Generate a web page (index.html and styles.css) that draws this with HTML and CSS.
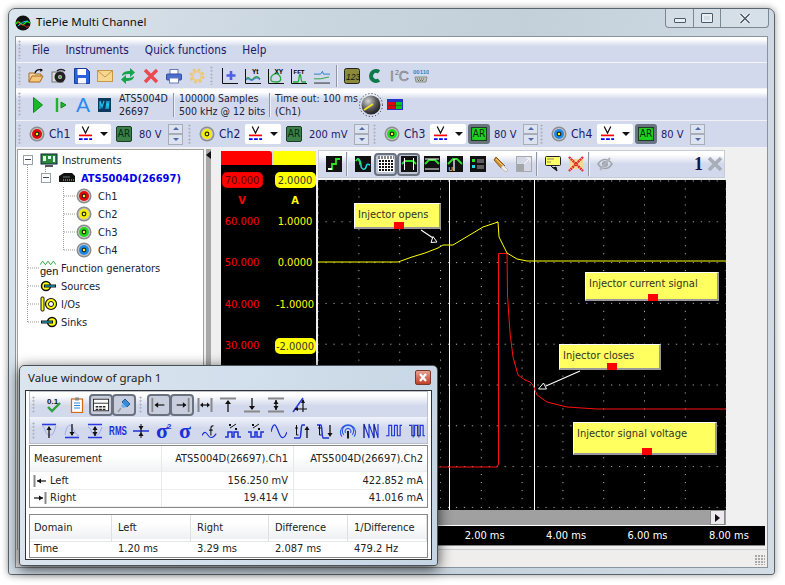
FILE: index.html
```html
<!DOCTYPE html>
<html lang="en">
<head>
<meta charset="utf-8">
<title>TiePie Multi Channel</title>
<link rel="stylesheet" href="styles.css">
</head>
<body>
<svg class="defs" width="0" height="0" aria-hidden="true">
  <defs>
    <symbol id="ring" viewBox="0 0 16 16"><circle cx="8" cy="8" r="7.5" fill="#8d8d8d"/><circle cx="8" cy="8" r="6" fill="#c8c8c8"/><circle cx="8" cy="8" r="5" fill="var(--c)"/><circle cx="8" cy="8" r="2.4" fill="#222"/><circle cx="8" cy="8" r="1.2" fill="#ff0"/></symbol>
    <symbol id="volt" viewBox="0 0 16 16"><path d="M4.500 0l3.500 7 3.500-7" fill="none" stroke="#111" stroke-width="1.300"/><path d="M1 9.500h14" stroke="#f00" stroke-width="1.800"/><path d="M1 13.500h14" stroke="#00f" stroke-width="1.800" stroke-dasharray="4 1.500"/></symbol>
    <radialGradient id="knobG" cx=".35" cy=".3" r=".8"><stop offset="0" stop-color="#d5d5d5"/><stop offset=".55" stop-color="#555"/><stop offset="1" stop-color="#111"/></radialGradient>
    <pattern id="grid" x="317.6" y="180.5" width="40.8" height="40.8" patternUnits="userSpaceOnUse">
      <rect x="0" y="0" width="1" height="1" fill="#ccc"/><rect x="8" y="0" width="1" height="1" fill="#ccc"/><rect x="16" y="0" width="1" height="1" fill="#ccc"/><rect x="24" y="0" width="1" height="1" fill="#ccc"/><rect x="32" y="0" width="1" height="1" fill="#ccc"/>
      <rect x="0" y="8" width="1" height="1" fill="#ccc"/><rect x="0" y="16" width="1" height="1" fill="#ccc"/><rect x="0" y="24" width="1" height="1" fill="#ccc"/><rect x="0" y="32" width="1" height="1" fill="#ccc"/>
    </pattern>
  </defs>
</svg>

<div class="window">
  <header class="titlebar">
    <svg class="app-icon" viewBox="0 0 16 16"><circle cx="8" cy="8" r="7.5" fill="#111"/><path d="M1 9c3-6 5 3 8 0s3-3 6-1" fill="none" stroke="#0f0" stroke-width="1.2"/><path d="M2 6c3 5 6 3 8 5s2 1 4 0" fill="none" stroke="#f22" stroke-width="1"/><path d="M3 11c3-3 6-5 10-5" fill="none" stroke="#2cf" stroke-width="1"/></svg>
    <span class="title-text">TiePie Multi Channel</span>
    <div class="caption">
      <span class="cap-btn cap-min"><i class="glyph-min"></i></span>
      <span class="cap-btn cap-max"><i class="glyph-max"></i></span>
      <span class="cap-btn cap-close"><svg width="12" height="11" viewBox="0 0 12 11"><path d="M1.5 1l9 9M10.5 1l-9 9" stroke="#fff" stroke-width="3.2"/><path d="M1.5 1l9 9M10.5 1l-9 9" stroke="#4a5a68" stroke-width="1.6"/></svg></span>
    </div>
  </header>

  <div class="client">
    <nav class="menubar">
      <span class="gripper"></span>
      <span class="menu-item">File</span><span class="menu-item">Instruments</span><span class="menu-item">Quick functions</span><span class="menu-item">Help</span>
    </nav>

    <div class="tb tb-main">
      <span class="gripper"></span>
      <div class="icons">
        <svg class="i" viewBox="0 0 16 16"><path d="M1 14V5h5l1 1h6v2" fill="#f2d8a0" stroke="#a86a20"/><path d="M1 14l3-6h11l-3 6z" fill="#f4c878" stroke="#a86a20"/><path d="M7 5c1-3 4-4 7-3" fill="none" stroke="#111" stroke-width="1.4"/><path d="M12 .5l3 1.5-2.500 2z" fill="#111"/></svg>
        <svg class="i" viewBox="0 0 16 16"><rect x="1" y="4" width="11" height="10" fill="#ddd" stroke="#777"/><circle cx="9" cy="9" r="5.500" fill="#222"/><circle cx="9" cy="9" r="2" fill="#c8c8c8"/><path d="M6 3c2-2 6-2 8 0" fill="none" stroke="#222" stroke-width="1.500"/><circle cx="9" cy="9" r="1" fill="#2a2"/></svg>
        <svg class="i" viewBox="0 0 16 16"><path d="M.5.5h12l3 3v12H.5z" fill="#2a62d8" stroke="#173f96"/><rect x="3.500" y="1" width="8.500" height="6" fill="#fff"/><rect x="4" y="10" width="8" height="5.500" fill="#f4f6ff"/></svg>
        <svg class="i" viewBox="0 0 16 16"><rect x=".5" y="2.500" width="15" height="11" fill="#f6d790" stroke="#c59848"/><path d="M1 3l7 6 7-6" fill="none" stroke="#c59848"/></svg>
        <svg class="i" viewBox="0 0 16 16"><path d="M2 8c0-4 4-5 8-5V0l5 4.500L10 9V6c-3 0-5 0-8 2z" fill="#16a34a"/><path d="M14 8c0 4-4 5-8 5v3l-5-4.500L6 7v3c3 0 5 0 8-2z" fill="#16a34a"/></svg>
        <svg class="i" viewBox="0 0 16 16"><path d="M2 2l12 12M14 2L2 14" stroke="#e84a50" stroke-width="3.400"/></svg>
        <svg class="i" viewBox="0 0 16 16"><rect x="4" y="1.500" width="8" height="5" fill="#fff" stroke="#6a7ab8"/><rect x=".5" y="6" width="15" height="6" rx="1" fill="#4a6fd0" stroke="#32509c"/><rect x="3.500" y="10" width="9" height="5" fill="#fff" stroke="#6a7ab8"/></svg>
        <svg class="i" viewBox="0 0 16 16"><circle cx="8" cy="8" r="6" fill="none" stroke="#e9c778" stroke-width="3.200" stroke-dasharray="2.600 2.100"/><circle cx="8" cy="8" r="4.500" fill="none" stroke="#eecb84" stroke-width="2"/></svg>
      </div>
      <span class="gripper gripper-mid"></span>
      <div class="icons">
        <svg class="i" viewBox="0 0 16 16"><path d="M.5 0v15.500H16" fill="none" stroke="#111"/><path d="M9 3v9M4.500 7.500h9" stroke="#4e5ee8" stroke-width="2.600"/></svg>
        <svg class="i" viewBox="0 0 16 16"><path d="M.5 1v14.500H16" fill="none" stroke="#111"/><path d="M1 11c3-4 4 3 7 0s4-3 7 0" fill="none" stroke="#2a9a58" stroke-width="1.500"/><path d="M1 12c3-3 4 2 7 0s4-3 7 0" fill="none" stroke="#3a7ae0"/><text class="svt" x="7" y="6" font-size="6.500" font-weight="700">Yt</text></svg>
        <svg class="i" viewBox="0 0 16 16"><path d="M.5 1v14.500H16" fill="none" stroke="#111"/><path d="M3 12c-1-5 5-8 8-5s2 7-2 7-6-1-6-2z" fill="none" stroke="#22a83a" stroke-width="1.300"/><text class="svt" x="6.500" y="5.500" font-size="6.500" font-weight="700">XY</text></svg>
        <svg class="i" viewBox="0 0 16 16"><path d="M.5 1v14.500H16" fill="none" stroke="#111"/><path d="M2 14h5c1 0 1-8 2-8s1 8 2 8h4" fill="none" stroke="#22a83a" stroke-width="1.300"/><text class="svt" x="2.500" y="5.500" font-size="6" font-weight="700">FFT</text></svg>
        <svg class="i" viewBox="0 0 17 16"><path d="M0 6h7l2-3 1 3h7" fill="none" stroke="#2a7ac8"/><path d="M0 11h7l9-2" fill="none" stroke="#22a83a"/><path d="M0 15.500h17" stroke="#222"/></svg>
      </div>
      <span class="vsep"></span>
      <div class="icons icons-end">
        <svg class="i" viewBox="0 0 16 16"><rect x=".5" y=".5" width="15" height="15" rx="2" fill="#8a8a3a" stroke="#222"/><text class="svt" x="2" y="11.500" font-size="8.500" font-style="italic" fill="#111">123</text></svg>
        <svg class="i" viewBox="0 0 16 16"><path d="M12 4a5 5 0 1 0 0 8" fill="none" stroke="#0d7a4c" stroke-width="4"/></svg>
        <span class="i2c"><b>I</b><sup>2</sup><b>C</b></span>
        <svg class="i" viewBox="0 0 16 16"><text class="svt" x="0" y="6" font-size="6" font-weight="700" fill="#2a8ac0">00110</text><path d="M2 9h12l-1 5H3z" fill="#b8c2b8" stroke="#8a8f8a"/><path d="M4 11h8M5 12.500h6" stroke="#5a6a5a" stroke-dasharray="1 1"/></svg>
      </div>
    </div>

    <div class="tb tb-inst">
      <span class="gripper"></span>
      <div class="icons">
        <svg class="i" viewBox="0 0 16 16"><path d="M1.500 .5l9 7.500-9 7.500z" fill="#1db52c" stroke="#0d8a1c"/></svg>
        <svg class="i" viewBox="0 0 16 16"><path d="M2 1v14" stroke="#1db52c" stroke-width="2.400"/><path d="M6 5l5 3-5 3z" fill="#1db52c" stroke="#0d8a1c"/></svg>
        <span class="a-glyph">A</span>
        <svg class="i i-m" viewBox="0 0 13 16"><rect width="13" height="14" y="1" fill="#0a3a60"/><path d="M2 12V4l2 6 2-6M8 12l1-8 1 8 1-8" fill="none" stroke="#20c0f0" stroke-width="1.200"/></svg>
      </div>
      <div class="info info-a"><span>ATS5004D</span><span>26697</span></div>
      <span class="vsep vsep-tall"></span>
      <div class="info info-s"><span>100000 Samples</span><span>500 kHz @ 12 bits</span></div>
      <span class="vsep vsep-tall"></span>
      <div class="info info-t"><span>Time out: 100 ms</span><span>(Ch1)</span></div>
      <svg class="knob" viewBox="0 0 24 24"><circle cx="12" cy="12" r="11.500" fill="none" stroke="#222" stroke-dasharray="1 2.200"/><circle cx="12" cy="12" r="9.500" fill="url(#knobG)"/><path d="M5 17l9-6" stroke="#f2e21c" stroke-width="1.800"/></svg>
      <svg class="colorbox" viewBox="0 0 16 11"><rect width="16" height="11" fill="#2233cc"/><rect x="1" y="3" width="7" height="7" fill="#e00010"/><rect x="9" y="3" width="6" height="7" fill="#10c020"/><path d="M1 6.500h14" stroke="#0a5a10" stroke-width=".6"/></svg>
    </div>

    <div class="tb tb-chan">
      <div class="chan chan-1">
        <span class="gripper"></span>
        <svg class="ring c1"><use href="#ring"/></svg>
        <span class="chan-name">Ch1</span>
        <span class="combo"><svg class="v"><use href="#volt"/></svg><i class="caret"></i></span>
        <span class="ar">AR</span>
        <span class="range r1">80 V</span>
        <span class="spin"><i class="up"></i><i class="down"></i></span>
      </div>
      <div class="chan chan-2">
        <span class="gripper"></span>
        <svg class="ring c2"><use href="#ring"/></svg>
        <span class="chan-name">Ch2</span>
        <span class="combo"><svg class="v"><use href="#volt"/></svg><i class="caret"></i></span>
        <span class="ar">AR</span>
        <span class="range r2">200 mV</span>
        <span class="spin"><i class="up"></i><i class="down"></i></span>
      </div>
      <div class="chan chan-3">
        <span class="gripper"></span>
        <svg class="ring c3"><use href="#ring"/></svg>
        <span class="chan-name">Ch3</span>
        <span class="combo"><svg class="v"><use href="#volt"/></svg><i class="caret"></i></span>
        <span class="ar on">AR</span>
        <span class="range r1">80 V</span>
        <span class="spin"><i class="up"></i><i class="down"></i></span>
      </div>
      <div class="chan chan-4">
        <span class="gripper"></span>
        <svg class="ring c4"><use href="#ring"/></svg>
        <span class="chan-name">Ch4</span>
        <span class="combo"><svg class="v"><use href="#volt"/></svg><i class="caret"></i></span>
        <span class="ar on">AR</span>
        <span class="range r1">80 V</span>
        <span class="spin"><i class="up"></i><i class="down"></i></span>
      </div>
    </div>

    <div class="workspace">
      <aside class="tree">
        <svg class="tree-lines" width="186" height="180"><path d="M9.500 15v157M10 118h12M10 136h12M10 154h12M10 172h12M27.500 15v8M45.500 37v63M46 46h12M46 64h12M46 82h12M46 100h12" fill="none" stroke="#999" stroke-dasharray="1 1"/></svg>
        <div class="node"><span class="exp"></span>
          <svg class="ti" viewBox="0 0 18 16"><rect x="1" y="2" width="16" height="10" fill="#2a8a3a" stroke="#124"/><path d="M3 4h3v5H3zM8 4h3v3H8zM13 4h2v6h-2z" fill="#dfe"/><path d="M5 13h8v2H5z" fill="#555"/></svg>
          <span class="label">Instruments</span></div>
        <div class="node lv1"><span class="exp"></span>
          <svg class="ti" viewBox="0 0 18 16"><path d="M1 12V6l5-3h8l3 3v6z" fill="#111"/><path d="M5 10h11" stroke="#e33" stroke-dasharray="1 1" stroke-width="2"/><path d="M5 7h7" stroke="#777"/></svg>
          <span class="label dev">ATS5004D(26697)</span></div>
        <div class="node lv2"><svg class="ring c1"><use href="#ring"/></svg><span class="label">Ch1</span></div>
        <div class="node lv2"><svg class="ring c2"><use href="#ring"/></svg><span class="label">Ch2</span></div>
        <div class="node lv2"><svg class="ring c3"><use href="#ring"/></svg><span class="label">Ch3</span></div>
        <div class="node lv2"><svg class="ring c4"><use href="#ring"/></svg><span class="label">Ch4</span></div>
        <div class="node lv0"><span class="gen"><span class="gen-text">gen</span><svg class="gen-wave" viewBox="0 0 18 5"><path d="M0 5l3-4 3 4 3-4 3 4 3-4 3 4" fill="none" stroke="#1a9a2a"/></svg></span><span class="label">Function generators</span></div>
        <div class="node lv0"><svg class="ti" viewBox="0 0 18 16"><circle cx="6" cy="8" r="4.500" fill="#ff0" stroke="#111" stroke-width="1.500"/><path d="M4 8h12" stroke="#111" stroke-width="3"/><path d="M5 8h10" stroke="#2cf"/></svg><span class="label">Sources</span></div>
        <div class="node lv0"><svg class="ti" viewBox="0 0 18 16"><rect x="1" y="1" width="3" height="14" rx="1" fill="#ff0" stroke="#111"/><circle cx="11" cy="8" r="5.500" fill="#ff0" stroke="#111" stroke-width="1.200"/><circle cx="11" cy="8" r="2.500" fill="#fff" stroke="#111"/></svg><span class="label">I/Os</span></div>
        <div class="node lv0"><svg class="ti" viewBox="0 0 18 16"><circle cx="12" cy="8" r="4.500" fill="#ff0" stroke="#111" stroke-width="1.500"/><path d="M1 8h12" stroke="#111" stroke-width="3"/><path d="M2 8h10" stroke="#2cf"/></svg><span class="label">Sinks</span></div>
      </aside>
      <div class="splitter"><i class="split-arrow"></i></div>

      <div class="right">
        <div class="scope">
          <div class="axes">
            <div class="axis-tabs"><span class="tab red"></span><span class="tab yellow"></span></div>
            <div class="axis-grid">
              <span class="badge red">70.000</span><span class="badge yellow">2.0000</span>
              <span class="unit red-t">V</span><span class="unit yel-t">A</span>
              <span class="tick red-t">60.000</span><span class="tick yel-t">1.0000</span>
              <span class="tick red-t">50.000</span><span class="tick yel-t">0.0000</span>
              <span class="tick red-t">40.000</span><span class="tick yel-t">-1.0000</span>
              <span class="tick red-t">30.000</span><span class="badge yellow">-2.0000</span>
            </div>
          </div>
          <div class="plot-col">
            <div class="plot-tb">
              <svg class="i" viewBox="0 0 16 16"><rect width="16" height="16" fill="#111"/><path d="M2 13h4V8h4V3h4" fill="none" stroke="#2de02d" stroke-width="1.800"/><path d="M2 13h4" stroke="#fff" stroke-width="1.800"/></svg>
              <span class="vsep vs-plot"></span>
              <svg class="i" viewBox="0 0 16 16"><rect width="16" height="16" fill="#111"/><path d="M1 5c3-6 5 2 5 5s4 5 5 1 2-3 4-2" fill="none" stroke="#2dd" stroke-width="1.500"/><path d="M1 5c2-4 4 0 4 4" fill="none" stroke="#2de02d" stroke-width="1.500"/></svg>
              <span class="pbtn"><svg class="i" viewBox="0 0 16 16"><rect width="16" height="16" fill="#fff"/><path d="M0 1.500h16" stroke="#888" stroke-width="3" stroke-dasharray="2 1"/><path d="M1 5h14M1 8h14M1 11h14M1 14h14" stroke="#111" stroke-width="2" stroke-dasharray="2 1"/></svg></span>
              <span class="pbtn"><svg class="i" viewBox="0 0 16 16"><rect width="16" height="16" fill="#111"/><path d="M1 8l3-3h8l3 3" fill="none" stroke="#2de02d" stroke-width="1.800"/><path d="M3.500 2v12M12.500 2v12" stroke="#fff"/></svg></span>
              <svg class="i" viewBox="0 0 16 16"><rect width="16" height="16" fill="#111"/><path d="M1 8l4-4h6l4 4" fill="none" stroke="#2de02d" stroke-width="1.800"/><path d="M1 3h14M1 13h14" stroke="#fff"/></svg>
              <svg class="i" viewBox="0 0 16 16"><rect width="16" height="16" fill="#111"/><path d="M1 8l5-5h4l5 5" fill="none" stroke="#2de02d" stroke-width="1.800"/><path d="M7 3v12" stroke="#fff" stroke-width="1.300"/><text class="svt" x="1.500" y="15" font-size="6" fill="#fff">U</text></svg>
              <svg class="i" viewBox="0 0 16 16"><rect width="16" height="16" fill="#111"/><path d="M2 3h3v3H2z" fill="#2de02d"/><path d="M2 9h3v3H2z" fill="#2dd"/><path d="M7 4h7M7 6h7M7 10h7M7 12h7" stroke="#aaa"/></svg>
              <svg class="i" viewBox="0 0 16 16"><path d="M3 1l9 9-3 3-8-9z" fill="#d89030" stroke="#8a5a18"/><path d="M3 3l8 8" stroke="#f0d080"/><path d="M10 9l5 5-2 2-5-4z" fill="#eee" stroke="#bbb"/></svg>
              <svg class="i" viewBox="0 0 16 16"><rect x=".5" y=".5" width="15" height="15" fill="#d4d8e4" stroke="#a8aab0"/><rect x="1" y="8" width="7" height="7" fill="#a4a6aa"/><path d="M8 8l6-6M10 2h4v4" fill="none" stroke="#fafafa"/></svg>
              <span class="vsep vs-plot"></span>
              <svg class="i" viewBox="0 0 16 16"><rect x=".5" y=".5" width="15" height="9" rx="1" fill="#ff6" stroke="#222"/><path d="M2 3h7M2 6h4" stroke="#886"/><path d="M6 10l6 5-1-4-3 1z" fill="#111" stroke="#111"/></svg>
              <svg class="i" viewBox="0 0 16 16"><rect x="1" y="3" width="14" height="10" fill="#f0da90"/><path d="M1 1l14 14M15 1L1 15" stroke="#e02a30" stroke-width="2.400" stroke-dasharray="2 .6"/></svg>
              <span class="vsep vs-plot"></span>
              <svg class="i" viewBox="0 0 16 16"><path d="M1 8c4-6 10-6 14 0-4 6-10 6-14 0z" fill="none" stroke="#a0a4ac" stroke-width="1.500"/><circle cx="8" cy="8" r="3" fill="#a0a4ac"/><path d="M3 14L13 2" stroke="#b0b4bc" stroke-width="2"/></svg>
              <span class="graph-num">1</span>
              <svg class="i" viewBox="0 0 16 16"><path d="M2 2l12 12M14 2L2 14" stroke="#a8aeb8" stroke-width="3.600"/></svg>
            </div>
            <div class="plot">
              <svg class="plot-svg" viewBox="318 180 408 330" width="408" height="330">
                <rect x="318" y="180" width="408" height="330" fill="#000"/>
                <rect x="318" y="180" width="408" height="330" fill="url(#grid)"/>
                <path d="M449.500 180v330M534.500 180v330" stroke="#fff" stroke-width="1"/>
                <path d="M318 467H497L498.500 464V253.500H507L507.500 295L510 333L513 357L518 375L525 380L530 382L533 385L537 395L547 402L567 407L597 409H726" fill="none" stroke="#ff1010" stroke-width="1"/>
                <path d="M318 262H398L412 257L425 253L438 248L443 245L453 245L468 236L483 227L498 222L499 237L507 253L517 259L527 261H726" fill="none" stroke="#ff0" stroke-width="1"/>
                <path d="M421 230l12 8M580 371l-34 15" stroke="#fff" stroke-width="1.100"/>
                <path d="M437 242l-6 .5 2-6z" fill="#000" stroke="#fff"/>
                <path d="M538.500 389l5-6 3 6z" fill="#000" stroke="#fff"/>
              </svg>
              <div class="note n-open">Injector opens<i></i></div>
              <div class="note n-cur">Injector current signal<i></i></div>
              <div class="note n-close">Injector closes<i></i></div>
              <div class="note n-volt">Injector signal voltage<i></i></div>
            </div>
            <div class="hscroll"><span class="hbtn"><i></i></span></div>
          </div>
        </div>
        <div class="timebar"><span>2.00 ms</span><span>4.00 ms</span><span>6.00 ms</span><span>8.00 ms</span></div>
      </div>
    </div>
    <footer class="statusbar"><span class="sizegrip"></span></footer>
  </div>

  <section class="valwin">
    <header class="val-title"><span>Value window of graph 1</span><span class="val-close"><svg width="10" height="9" viewBox="0 0 10 9"><path d="M2 1l6 7M8 1L2 8" stroke="#fff" stroke-width="2.200"/></svg></span></header>
    <div class="val-body">
      <div class="vtb vtb-1">
        <span class="gripper"></span>
        <svg class="i vi-check" viewBox="0 0 16 16"><text class="svt" x="1" y="7" font-size="8" font-weight="700" fill="#111">0.1</text><path d="M2 10l4 4 8-8" fill="none" stroke="#2aa040" stroke-width="2.400"/></svg>
        <svg class="i vi-clip" viewBox="0 0 16 16"><rect x="2.500" y="2" width="11" height="13.500" fill="#fff" stroke="#d06a10" stroke-width="1.200"/><rect x="6" y=".5" width="4" height="3" fill="#888"/><path d="M5 6h6M5 8.500h6M5 11h6" stroke="#2a8ae0"/></svg>
        <span class="vbtn"><svg class="i" viewBox="0 0 18 16" width="18"><rect x=".5" y="1.500" width="17" height="13" fill="#fff" stroke="#222"/><path d="M1 6h16" stroke="#222"/><path d="M3 10h12M3 13h12" stroke="#222" stroke-width="1.500" stroke-dasharray="3 1"/></svg></span>
        <span class="vbtn"><svg class="i" viewBox="0 0 16 16"><path d="M9 2l5 5-3 3-5-5z" fill="#3a8ad8" stroke="#1a5a98"/><path d="M7 6l4 4-4 1-2-2z" fill="#6ab0f0"/><path d="M5 11l-3 4" stroke="#999" stroke-width="1.400"/></svg></span>
        <span class="gripper"></span>
        <span class="vbtn"><svg class="i" viewBox="0 0 18 16"><path d="M1.500 0v16" stroke="#888" stroke-width="2"/><path d="M5 8h10" stroke="#111" stroke-width="1.300"/><path d="M4 8l4-3v6z" fill="#111"/></svg></span>
        <span class="vbtn"><svg class="i" viewBox="0 0 18 16"><path d="M16.500 0v16" stroke="#888" stroke-width="2"/><path d="M3 8h10" stroke="#111" stroke-width="1.300"/><path d="M14 8l-4-3v6z" fill="#111"/></svg></span>
        <svg class="i vi-c1" viewBox="0 0 16 16"><path d="M1.500 1v14M14.500 1v14" stroke="#888" stroke-width="2"/><path d="M4 8h8" stroke="#111" stroke-width="1.200"/><path d="M3 8l3-2.500v5zM13 8l-3-2.500v5z" fill="#111"/></svg>
        <svg class="i vi-c2" viewBox="0 0 16 16"><path d="M0 1.500h16" stroke="#888" stroke-width="2"/><path d="M8 4v11" stroke="#111" stroke-width="1.300"/><path d="M8 3l-3 4h6z" fill="#111"/></svg>
        <svg class="i vi-c3" viewBox="0 0 16 16"><path d="M0 14.500h16" stroke="#888" stroke-width="2"/><path d="M8 1v11" stroke="#111" stroke-width="1.300"/><path d="M8 13l-3-4h6z" fill="#111"/></svg>
        <svg class="i vi-c3" viewBox="0 0 16 16"><path d="M0 1.500h16M0 14.500h16" stroke="#888" stroke-width="2"/><path d="M8 3v10" stroke="#111" stroke-width="1.300"/><path d="M8 3L5.500 7h5zM8 13L5.500 9h5z" fill="#111"/></svg>
        <svg class="i vi-c3" viewBox="0 0 16 16"><path d="M1 15L11 1" stroke="#2a3ae0" stroke-width="1.500"/><path d="M11 3v12M3 12h12" stroke="#111" stroke-width="1.200"/><path d="M11 2L9 6h4zM2 12l4-2v4z" fill="#111"/></svg>
      </div>
      <div class="vtb vtb-2">
        <span class="gripper"></span>
        <svg class="i" viewBox="0 0 16 16"><path d="M1 1.500h14" stroke="#2a3ae0" stroke-width="1.600"/><path d="M1 3c3 0 3 9 7 9s4 0 7-9" fill="none" stroke="#a0a8ee"/><path d="M8 4v11" stroke="#111" stroke-width="1.300"/><path d="M8 3L5.500 7h5z" fill="#111"/></svg>
        <svg class="i" viewBox="0 0 16 16"><path d="M1 14.500h14" stroke="#2a3ae0" stroke-width="1.600"/><path d="M1 12C3 1 6 1 8 4s5 10 7 8" fill="none" stroke="#a0a8ee"/><path d="M8 1v11" stroke="#111" stroke-width="1.300"/><path d="M8 13l-2.500-4h5z" fill="#111"/></svg>
        <svg class="i" viewBox="0 0 16 16"><path d="M1 1.500h14M1 14.500h14" stroke="#2a3ae0" stroke-width="1.600"/><path d="M1 4c3 0 3 8 7 8s4 0 7-8" fill="none" stroke="#a0a8ee"/><path d="M8 4v9" stroke="#111" stroke-width="1.300"/><path d="M8 3L5.500 7h5zM8 13L5.500 9h5z" fill="#111"/></svg>
        <span class="rms">RMS</span>
        <svg class="i" viewBox="0 0 16 16"><path d="M0 8h16" stroke="#1a30d8" stroke-width="1.500"/><path d="M8 1v14" stroke="#111"/><path d="M8 7L5.500 3h5zM8 9l-2.500 4h5z" fill="#111"/></svg>
        <span class="sigma s2">σ<sup>2</sup></span>
        <span class="sigma s1">σ</span>
        <svg class="i" viewBox="0 0 18 16"><path d="M0 13c3-6 5-3 7 0s5 4 9-2" fill="none" stroke="#1a30d8" stroke-width="1.200"/><path d="M10 13V5c0-3 2-3 3-3M8 7h4" fill="none" stroke="#111" stroke-width="1.200"/></svg>
        <svg class="i" viewBox="0 0 16 16"><path d="M0 14h3v-5h4v5h2V9h4v5h3" fill="none" stroke="#1a30d8" stroke-width="1.500"/><path d="M5 5l6-4" stroke="#111"/><path d="M4 2h2M10 6h2" stroke="#111" stroke-width="2"/></svg>
        <svg class="i" viewBox="0 0 16 16"><path d="M0 9h3v5h4V9h2v5h4V9h3" fill="none" stroke="#1a30d8" stroke-width="1.500"/><path d="M5 5l6-4" stroke="#111"/><path d="M4 2h2M10 6h2" stroke="#111" stroke-width="2"/></svg>
        <svg class="i" viewBox="0 0 17 16"><path d="M0 9c3-12 5-8 8 0s6 8 9 0" fill="none" stroke="#1a30d8" stroke-width="1.300"/></svg>
        <svg class="i" viewBox="0 0 16 16"><path d="M0 15h6c1 0 1-13 2-13h3" fill="none" stroke="#1a30d8" stroke-width="1.500"/><path d="M2.500 2v10h2M1 5h3" fill="none" stroke="#111"/><path d="M13 5v10" stroke="#111" stroke-width="1.300"/><path d="M13 3l-2.500 4h5z" fill="#111"/></svg>
        <svg class="i" viewBox="0 0 16 16"><path d="M0 2h4c1 0 1 13 2 13h6" fill="none" stroke="#1a30d8" stroke-width="1.500"/><path d="M2.500 2v10h2M1 5h3" fill="none" stroke="#111"/><path d="M13 2v10" stroke="#111" stroke-width="1.300"/><path d="M13 14l-2.500-4h5z" fill="#111"/></svg>
        <svg class="i" viewBox="0 0 17 16"><path d="M4 12a6 6 0 1 1 9 0M2 14a8 8 0 1 1 13 0M6 10a3 3 0 1 1 5 0" fill="none" stroke="#2a5ae8" stroke-width="1.200"/><path d="M8.500 8v8" stroke="#111" stroke-width="2"/></svg>
        <svg class="i" viewBox="0 0 16 16"><path d="M1 15V1l5 14V1l5 14V1l4 14V1" fill="none" stroke="#1a30d8" stroke-width="1.100"/><path d="M1 15V1M11 15V1" stroke="#111" stroke-width=".6"/></svg>
        <svg class="i" viewBox="0 0 17 16"><path d="M0 13h3V2h3v11h3V2h3v11h3V2h2" fill="none" stroke="#1a30d8" stroke-width="1.200"/></svg>
        <svg class="i" viewBox="0 0 17 16"><path d="M0 2h3v11h3V2h3v11h3V2h3v11h2" fill="none" stroke="#1a30d8" stroke-width="1.200"/><path d="M4.500 1v14M10.500 1v14" stroke="#111" stroke-width=".7"/></svg>
      </div>
      <div class="vtable">
        <div class="vrow vhead"><span class="c-a">Measurement</span><span class="c-b">ATS5004D(26697).Ch1</span><span class="c-c">ATS5004D(26697).Ch2</span></div>
        <div class="vrow"><span class="c-a"><svg class="cur" viewBox="0 0 14 12"><path d="M1.500 0v12" stroke="#888" stroke-width="2"/><path d="M4 6h9" stroke="#111" stroke-width="1.200"/><path d="M4 6l4-2.500v5z" fill="#111"/></svg>Left</span><span class="c-b">156.250 mV</span><span class="c-c">422.852 mA</span></div>
        <div class="vrow"><span class="c-a"><svg class="cur" viewBox="0 0 14 12"><path d="M12.500 0v12" stroke="#888" stroke-width="2"/><path d="M1 6h9" stroke="#111" stroke-width="1.200"/><path d="M10 6L6 3.500v5z" fill="#111"/></svg>Right</span><span class="c-b">19.414 V</span><span class="c-c">41.016 mA</span></div>
      </div>
      <div class="dtable">
        <div class="drow dhead"><span>Domain</span><span>Left</span><span>Right</span><span>Difference</span><span>1/Difference</span></div>
        <div class="drow"><span>Time</span><span>1.20 ms</span><span>3.29 ms</span><span>2.087 ms</span><span>479.2 Hz</span></div>
      </div>
    </div>
  </section>
</div>
</body>
</html>
```

FILE: styles.css
```css
* { box-sizing: border-box; }
html, body { margin: 0; height: 100%; overflow: hidden; background: #fff; }
body { padding: 8px 10px 10px 8px; font-family: "DejaVu Sans Condensed", "DejaVu Sans", sans-serif; font-stretch: condensed; font-size: 11px; color: #222; }
.defs { position: absolute; }
.svt { font-family: "Liberation Sans", sans-serif; }

.window {
  position: relative; width: 767px; height: 567px;
  border: 1px solid #5a646c; border-radius: 7px 7px 3px 3px;
  background: linear-gradient(100deg, #dbe5ee 0%, #c9d5df 35%, #c3d0da 60%, #d3dde6 100%);
  box-shadow: 0 0 7px rgba(0,0,0,.4);
  padding: 0 6px 6px 6px;
  display: flex; flex-direction: column;
}
.titlebar { height: 27px; display: flex; align-items: center; flex: none; }
.app-icon { width: 16px; height: 16px; flex: none; }
.title-text { font-family: "Noto Sans", sans-serif; font-stretch: normal; font-size: 11.500px; margin: -3px 0 0 5px; color: #111; }
.caption { margin-left: auto; margin-right: -1px; margin-top: -8px; display: flex; height: 19px; border: 1px solid #7b8792; border-top: 0; border-radius: 0 0 4px 4px; background: rgba(255,255,255,.18); }
.cap-btn { display: flex; align-items: center; justify-content: center; }
.cap-min { width: 28px; border-right: 1px solid #7b8792; }
.cap-max { width: 27px; border-right: 1px solid #7b8792; }
.cap-close { width: 47px; }
.glyph-min { width: 12px; height: 5px; background: #e8eef2; border: 1px solid #4a5a68; margin-top: 5px; border-radius: 1px; }
.glyph-max { width: 12px; height: 10px; border: 1px solid #4a5a68; box-shadow: inset 0 0 0 2px #e8eef2; border-radius: 1px; }

.client { flex: 1; display: flex; flex-direction: column; background: #f0f0f0; border: 1px solid #8a949c; min-height: 0; }

.gripper { width: 3px; align-self: stretch; margin: 3px 0; flex: none; background: radial-gradient(circle at 1.5px 1.5px, #aeb2bc 1px, transparent 1.1px) 0 0 / 3px 3.500px; }
.menubar { height: 26px; display: flex; align-items: center; background: linear-gradient(#fff 0, #fff 8%, #d3d9ec 38%, #d3d9ec 100%); border-bottom: 1px solid #f2f4fa; flex: none; padding-left: 2px; font-size: 11.700px; }
.menu-item { color: #201868; }
.menu-item:nth-child(2) { margin-left: 11px; }
.menu-item:nth-child(3) { margin-left: 16px; }
.menu-item:nth-child(4) { margin-left: 16px; }
.menu-item:nth-child(5) { margin-left: 16px; }

.tb { display: flex; align-items: center; background: #d3d9ec; border-bottom: 1px solid #f0f2f8; flex: none; padding-left: 2px; }
.tb-main { height: 26px; }
.tb-main .icons { margin-left: 7px; }
.tb-main .icons.icons-end { margin-left: 0; }
.icons { display: flex; align-items: center; gap: 7px; }
.i { width: 16px; height: 16px; flex: none; }
.gripper-mid { margin-left: 5px; }
.tb-main .gripper-mid + .icons { margin-left: 9px; }
.vsep { width: 2px; height: 22px; margin: 0 6px; flex: none; background: #8f96a8; border-right: 1px solid #eef0f8; }
.i2c { width: 16px; height: 16px; flex: none; display: flex; font-family: "Liberation Sans", sans-serif; font-size: 14px; line-height: 16px; color: #aeb2ba; -webkit-text-stroke: .5px #6c7078; font-stretch: normal; }
.i2c b { font-weight: 400; }
.i2c sup { font-size: 7px; line-height: 9px; -webkit-text-stroke: 0; color: #666; margin: 0 0 0 1px; }
.tb-inst { height: 32px; background: linear-gradient(#fff 0, #fff 10%, #d3d9ec 32%); }
.tb-inst .icons { margin-left: 11px; gap: 7px; }
.a-glyph { width: 16px; height: 16px; margin-left: -3px; font-family: "Liberation Sans", sans-serif; font-stretch: normal; font-size: 21px; line-height: 16px; text-align: center; color: #2a8af0; flex: none; }
.tb-inst .i-m { width: 13px; }
.tb-inst .info { display: flex; flex-direction: column; font-size: 10.500px; line-height: 13px; white-space: nowrap; color: #223; flex: none; }
.tb-inst .info-a { margin-left: 8px; width: 50px; }
.tb-inst .info-s { width: 86px; }
.tb-inst .info-t { width: 84px; }
.vsep-tall { height: 24px; margin: 0 4px; }
.knob { width: 24px; height: 24px; flex: none; }
.colorbox { width: 16px; height: 11px; margin-left: 4px; flex: none; }

.tb-chan { height: 27px; padding-left: 2px; }
.chan { display: flex; align-items: center; height: 100%; flex: none; }
.chan-1 { width: 170px; }
.chan-2 { width: 185px; }
.chan-3 { width: 167px; }
.chan-4 { width: 165px; }
.ring { width: 16px; height: 16px; flex: none; margin-left: 8px; }
.c1 { --c: #e80808; } .c2 { --c: #f6f000; } .c3 { --c: #22d822; } .c4 { --c: #1c8ae8; }
.chan-name { font-size: 12px; margin-left: 4px; width: 26px; color: #201868; }
.combo { width: 36px; height: 20px; background: #fff; border-radius: 2px; display: flex; align-items: center; padding-left: 3px; gap: 6px; }
.v { width: 15px; height: 16px; }
.caret { width: 0; height: 0; border: 4px solid transparent; border-top: 4px solid #111; border-bottom: 0; margin-left: 1px; }
.ar { width: 16px; height: 16px; margin-left: 5px; background: #3a8048; border: 1px solid #1c3c24; border-radius: 2px; font-size: 10px; line-height: 14px; text-align: center; color: #0a2a10; flex: none; }
.ar.on { width: 22px; height: 20px; margin-left: 2px; background: radial-gradient(#1fd21f 60%, #149c14); border-width: 3px; border-color: #6a7480; border-radius: 3px; line-height: 14px; box-shadow: inset 0 0 0 1px #1c3c24; }
.range { font-size: 11px; margin-left: 7px; white-space: nowrap; color: #201868; flex: none; }
.ar.on + .range { margin-left: 4px; }
.r1 { width: 29px; } .r2 { width: 45px; }
.spin { width: 15px; height: 21px; display: flex; flex-direction: column; flex: none; }
.spin i { flex: 1; background: #dde2f0; border: 1px solid #a8aeb8; display: flex; align-items: center; justify-content: center; }
.spin i::after { content: ""; border: 3px solid transparent; }
.spin .up::after { border-bottom: 3px solid #5068a8; border-top: 0; }
.spin .down::after { border-top: 3px solid #5068a8; border-bottom: 0; }

.workspace { flex: 1; display: flex; min-height: 0; background: #f0f0f0; padding-top: 1px; }
.tree { position: relative; width: 187px; margin-left: 1px; background: #fff; border: 1px solid #a0a0a0; border-bottom: 0; padding: 1px 0 0 5px; flex: none; }
.tree-lines { position: absolute; left: 0; top: 0; }
.node { position: relative; height: 18px; display: flex; align-items: center; white-space: nowrap; }
.exp { width: 10px; height: 10px; border: 1px solid #98a0a8; background: linear-gradient(#fff 0 3px, #445 3px 4px, #fff 4px) center / 6px 100% no-repeat; flex: none; }
.ti { width: 18px; height: 16px; margin-left: 7px; flex: none; }
.label { margin-left: 4px; color: #223; }
.lv1 { padding-left: 18px; }
.dev { color: #0000e8; font-weight: 700; font-size: 11px; margin-left: 5px; }
.lv2 { padding-left: 53px; }
.lv2 .ring { margin-left: 0; }
.lv2 .label { margin-left: 6px; }
.lv0 { padding-left: 17px; }
.lv0 .ti { margin-left: 0; }
.lv0 .label { margin-left: 3px; }
.gen { position: relative; width: 18px; height: 18px; flex: none; }
.gen-text { position: absolute; left: 0; bottom: -1px; font-family: "Liberation Sans", sans-serif; font-stretch: normal; font-size: 11px; line-height: 13px; color: #111; }
.gen-wave { position: absolute; left: 0; top: 1px; width: 16px; height: 5px; }

.splitter { width: 9px; margin-left: 1px; flex: none; background: linear-gradient(90deg, #f0f0f0 0 1px, #a8a8a8 1px 6px, #f0f0f0 6px); position: relative; }
.split-arrow { position: absolute; left: 1px; top: 2px; border: 4px solid transparent; border-right: 5px solid #111; border-left: 0; }

.right { flex: 1; min-width: 0; display: flex; flex-direction: column; padding-right: 1px; }
.scope { flex: 1; display: flex; padding-left: 7px; min-height: 0; }
.axes { width: 95px; background: #000; margin-top: 2px; flex: none; margin-right: 2px; }
.axis-tabs { display: flex; gap: 2px; height: 14px; background: #d8d8d8; }
.tab { height: 14px; border-radius: 0 3px 0 0; }
.tab.red { width: 51px; background: #f00; }
.tab.yellow { flex: 1; background: #ff0; }
.axis-grid { display: grid; grid-template-columns: 53px 42px; grid-template-rows: 29px 20px repeat(4, 41.300px); padding-top: 7px; justify-items: center; text-align: center; align-items: start; font-size: 11px; }
.badge { width: 41px; height: 16px; line-height: 15px; border-radius: 5px; border: 1px dotted #ff0; color: #333; }
.badge.red { background: #f00; border-color: #b00; color: #500; margin-right: 11px; }
.badge.yellow { background: #ff0; color: #333; border-color: #ff0; }
.unit { font-weight: 700; font-size: 11px; line-height: 14px; margin-top: -7px; }
.tick { line-height: 15px; margin-top: -7px; }
.badge.yellow:last-child { margin-top: -7px; }
.red-t { color: #f00; margin-right: 11px; }
.yel-t { color: #ff0; }
.plot-col { width: 408px; flex: none; display: flex; flex-direction: column; }
.plot-tb { height: 28px; margin: 1px 0 2px; width: 407px; display: flex; align-items: center; padding: 0 1px 0 7px; gap: 7px; background: linear-gradient(#fff 0, #fff 14%, #d3d9ec 50%); border: 1px solid #c8ccd8; flex: none; }
.vs-plot { margin: 0 0 0 -3px; height: 24px; }
.pbtn { width: 23px; height: 23px; display: flex; align-items: center; justify-content: center; margin: 0 -4px; border: 2px solid #6a7280; border-radius: 4px; background: #c0c6d8; }
.pbtn + .pbtn { margin-left: -3px; }
.pbtn + .pbtn + .i { margin-left: 1px; }
.graph-num { margin-left: auto; font-family: "Liberation Serif", serif; font-stretch: normal; font-weight: 700; font-size: 18px; color: #0a1a50; margin-right: -3px; }
.plot { position: relative; height: 330px; flex: none; background: #000; }
.plot-svg { display: block; }
.note { position: absolute; background: #ffff60; border: 1px solid #fff; border-right: 2px solid #999; border-bottom: 2px solid #999; color: #332; font-size: 11px; padding: 3px 0 0 3px; line-height: 15px; white-space: nowrap; }
.note i { position: absolute; width: 10px; height: 7px; background: #f00; bottom: -2px; }
.n-open { left: 36px; top: 23px; width: 87px; height: 26px; }
.n-open i { left: 39px; }
.n-cur { left: 267px; top: 92px; width: 134px; height: 29px; }
.n-cur i { left: 62px; }
.n-close { left: 241px; top: 164px; width: 102px; height: 26px; }
.n-close i { left: 47px; }
.n-volt { left: 255px; top: 242px; width: 144px; height: 33px; }
.n-volt i { left: 68px; }
.hscroll { height: 16px; background: #a0a0a0; display: flex; justify-content: flex-end; border-bottom: 1px solid #fff; padding-right: 1px; flex: none; }
.hbtn { width: 15px; height: 15px; background: #eceaec; border: 1px solid #888; display: flex; align-items: center; justify-content: center; }
.hbtn i { border: 4px solid transparent; border-left: 5px solid #111; border-right: 0; }
.timebar { height: 20px; margin: 0 1px 3px 7px; flex: none; background: #000; color: #fff; display: flex; padding-left: 223px; line-height: 19px; font-size: 11px; border-bottom: 1px solid #888; }
.timebar span { width: 81.400px; text-align: center; flex: none; }
.statusbar { height: 18px; background: #f0eeec; border-top: 1px solid #d0d0d0; flex: none; position: relative; }
.sizegrip { position: absolute; right: 2px; bottom: 2px; width: 10px; height: 10px; background: radial-gradient(circle at 1px 1px, #a8a8a8 1px, transparent 1.100px) 0 0 / 3px 3px; }

.valwin { position: absolute; left: 10px; top: 356px; width: 419px; height: 201px; padding: 0 5px 5px; border: 1px solid #4a5058; border-radius: 5px 5px 3px 3px; background: linear-gradient(100deg, #dbe5ee 0%, #d2dfec 50%, #c6d5e4 100%); box-shadow: 0 3px 14px rgba(0,0,0,.75); display: flex; flex-direction: column; }
.val-title { height: 24px; display: flex; align-items: center; justify-content: space-between; font-family: "Noto Sans", sans-serif; font-stretch: normal; font-size: 11.500px; color: #222; padding-left: 3px; flex: none; }
.val-title > span:first-child { margin-top: -2px; }
.val-close { width: 16px; height: 15px; background: linear-gradient(#e8a090, #c04028); border: 1px solid #7a3a30; border-radius: 2px; display: flex; align-items: center; justify-content: center; margin-right: 1px; margin-top: -1px; }
.val-body { flex: 1; background: #fff; border: 1px solid #333; padding: 0 3px 1px; display: flex; flex-direction: column; min-height: 0; }
.vtb { display: flex; align-items: center; flex: none; }
.vtb .gripper { margin: 4px 0; }
.vtb-1 { height: 27px; background: linear-gradient(#fff 0, #fff 12%, #d3d9ec 55%); border: 1px solid #bcc0cc; padding-left: 2px; border-bottom: 1px solid #f0f2f8; }
.vtb-2 { height: 26px; background: linear-gradient(#eef1fa 0, #d3d9ec 40%); border: 1px solid #bcc0cc; border-top: 0; gap: 7px; padding-left: 2px; }
.vtb-2 .gripper { margin-right: -1px; }
.rms { width: 16px; flex: none; display: flex; justify-content: center; font-family: "Liberation Sans", sans-serif; font-stretch: normal; font-weight: 700; font-size: 12px; line-height: 14px; color: #1a30d8; transform: scale(.67, 1.1); }
.sigma { flex: none; font-family: "Liberation Serif", serif; font-stretch: normal; font-weight: 700; font-size: 22px; line-height: 16px; color: #1a30d8; display: flex; align-items: flex-start; }
.sigma.s2 { width: 16px; }
.sigma.s1 { width: 16px; }
.sigma sup { font-family: "Liberation Sans", sans-serif; font-size: 8px; line-height: 8px; margin-left: -1px; }
.vi-check { margin-left: 11px; }
.vi-clip { margin-left: 7px; margin-right: 4px; }
.vbtn { width: 24px; height: 22px; display: flex; align-items: center; justify-content: center; border: 2px solid #6a7280; border-radius: 4px; background: #c8cedd; flex: none; margin-right: -1px; }
.vbtn + .gripper { margin-left: 4px; }
.gripper + .vbtn { margin-left: 5px; }
.vbtn + .vi-c1 { margin-left: 4px; }
.vi-c2 { margin-left: 7px; }
.vi-c3 { margin-left: 8px; }
.vtable { height: 63px; margin-top: 1px; border: 1px solid #888; flex: none; font-size: 11px; background: #fff; }
.vrow { display: grid; grid-template-columns: 132px 132px 1fr; height: 17px; align-items: center; }
.vrow span { padding: 0 5px 0 3px; line-height: 17px; border-right: 1px solid #e8e8e8; height: 100%; white-space: nowrap; border-bottom: 1px solid #eee; display: flex; align-items: center; }
.c-b, .c-c { justify-content: flex-end; }
.vhead { height: 26px; background: linear-gradient(#fff 40%, #f0f2f4); }
.vrow span.c-c { padding-right: 4px; border-right: 0; }
.vrow.vhead span.c-a { padding-left: 4px; }
.cur { width: 14px; height: 12px; margin-right: 3px; flex: none; }
.dtable { margin-top: 6px; flex: 1; border: 1px solid #888; font-size: 11px; min-height: 0; }
.drow { display: grid; grid-template-columns: 82px 79px 78px 79px 1fr; height: 19px; align-items: center; }
.drow span { padding-left: 6px; white-space: nowrap; line-height: 20px; height: 100%; }
.drow span:first-child { padding-left: 4px; }
.dhead { height: 24px; background: linear-gradient(#fff 30%, #eef0f2); }
.dhead span { border-right: 1px solid #e0e0e0; border-bottom: 1px solid #e8e8e8; line-height: 26px; }
```
